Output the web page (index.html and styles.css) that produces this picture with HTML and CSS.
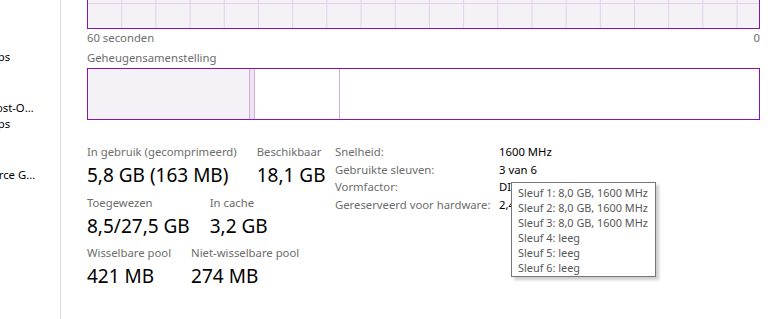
FILE: index.html
```html
<!DOCTYPE html>
<html lang="nl">
<head>
  <meta charset="UTF-8">
  <title>Taakbeheer - Geheugen</title>
  <link rel="stylesheet" href="styles.css">
</head>
<body>
  <div class="window">

    <!-- Sidebar: list of devices (scrolled, clipped on the left) -->
    <aside class="nav">
      <div class="nav-item">
        <div class="nav-line">Ethernet</div>
        <div class="nav-line">Ethernet</div>
        <div class="nav-line nav-sub">Verz.: 0 Ontv.: 0 Kbps</div>
      </div>
      <div class="nav-item">
        <div class="nav-line">Ethernet</div>
        <div class="nav-line">VirtualBox Host-Only Network</div>
        <div class="nav-line nav-sub">Verz.: 0 Ontv.: 0 Kbps</div>
      </div>
      <div class="nav-item">
        <div class="nav-line">GPU 0</div>
        <div class="nav-line">NVIDIA GeForce GTX 960</div>
        <div class="nav-line">1%</div>
      </div>
    </aside>

    <!-- Memory panel -->
    <main class="panel">
      <div class="graph"></div>
      <div class="axis">
        <span>60 seconden</span>
        <span>0</span>
      </div>

      <div class="caption">Geheugensamenstelling</div>
      <div class="composition">
        <div class="seg seg-used" style="width: 161px"></div>
        <div class="seg seg-modified" style="width: 4px"></div>
        <div class="seg seg-standby" style="width: 84px"></div>
        <div class="seg seg-free"></div>
      </div>

      <div class="details">
        <div class="stats">
          <div class="stat-row">
            <div class="stat">
              <div class="stat-label">In gebruik (gecomprimeerd)</div>
              <div class="stat-value">5,8 GB (163 MB)</div>
            </div>
            <div class="stat">
              <div class="stat-label">Beschikbaar</div>
              <div class="stat-value">18,1 GB</div>
            </div>
          </div>
          <div class="stat-row">
            <div class="stat">
              <div class="stat-label">Toegewezen</div>
              <div class="stat-value">8,5/27,5 GB</div>
            </div>
            <div class="stat">
              <div class="stat-label">In cache</div>
              <div class="stat-value">3,2 GB</div>
            </div>
          </div>
          <div class="stat-row">
            <div class="stat">
              <div class="stat-label">Wisselbare pool</div>
              <div class="stat-value">421 MB</div>
            </div>
            <div class="stat">
              <div class="stat-label">Niet-wisselbare pool</div>
              <div class="stat-value">274 MB</div>
            </div>
          </div>
        </div>

        <dl class="specs">
          <dt>Snelheid:</dt>
          <dd>1600 MHz</dd>
          <dt>Gebruikte sleuven:</dt>
          <dd>3 van 6</dd>
          <dt>Vormfactor:</dt>
          <dd>DIMM</dd>
          <dt>Gereserveerd voor hardware:</dt>
          <dd>2,4 MB</dd>
        </dl>

        <!-- hover tooltip over "Gebruikte sleuven" -->
        <div class="tooltip">
          <div>Sleuf 1: 8,0 GB, 1600 MHz</div>
          <div>Sleuf 2: 8,0 GB, 1600 MHz</div>
          <div>Sleuf 3: 8,0 GB, 1600 MHz</div>
          <div>Sleuf 4: leeg</div>
          <div>Sleuf 5: leeg</div>
          <div>Sleuf 6: leeg</div>
        </div>
      </div>
    </main>
  </div>
</body>
</html>
```

FILE: styles.css
```css
body {
  margin: 0;
  background: white;
  font-family: "Noto Sans", "Open Sans", sans-serif;
  font-size: 11.3px;
  color: #000;
}
.window {
  display: flex;
  height: 319px;
  overflow: hidden;
}

/* sidebar */
.nav {
  width: 60px;
  flex-shrink: 0;
  border-right: 1px solid #dadada;
  overflow: hidden;
}
.nav-item {
  padding: 17px 0 2px;
}
.nav-line {
  margin-left: -70px;
  width: 110px;
  line-height: 16px;
  white-space: nowrap;
  overflow: hidden;
  text-overflow: ellipsis;
}
.nav-sub {
  margin-left: -101px;
  width: auto;
}

/* main panel */
.panel {
  flex: 1;
  padding: 0 16px 0 26px;
}
.graph {
  height: 250px;
  margin-top: -223px;
  border: 1px solid #8b12ae;
  background-color: #f4f2f6;
  background-image:
    linear-gradient(to right, transparent 33.2px, #e3d0ea 33.2px),
    linear-gradient(to bottom, #e3d0ea 1px, transparent 1px);
  background-size: 34.2px 100%, 100% 25px;
}
.axis {
  display: flex;
  justify-content: space-between;
  margin-top: 1px;
  line-height: 16px;
  color: #6d6d6d;
}
.caption {
  margin-top: 4px;
  line-height: 16px;
  color: #6d6d6d;
}
.composition {
  display: flex;
  height: 50px;
  margin-top: 2px;
  border: 1px solid #8b12ae;
}
.seg {
  border-right: 1px solid #d0aedc;
}
.seg-used {
  background: #f4f2f6;
}
.seg-modified {
  background: #efe3f3;
}
.seg-free {
  flex: 1;
  border-right: none;
}

/* numbers below the bar */
.details {
  position: relative;
  display: flex;
  align-items: flex-start;
  margin-top: 24px;
}
.stats {
  width: 248px;
  flex-shrink: 0;
}
.stat-row {
  display: flex;
  gap: 20px;
  margin-bottom: 5.5px;
}
.stat-label {
  line-height: 16px;
  color: #6d6d6d;
  white-space: nowrap;
}
.stat-value {
  margin-top: 1px;
  font-size: 19px;
  line-height: 28px;
  white-space: nowrap;
}
.specs {
  display: grid;
  grid-template-columns: 164px auto;
  margin: -1px 0 0;
  line-height: 17.6px;
  white-space: nowrap;
}
.specs dt {
  color: #6d6d6d;
}
.specs dd {
  margin: 0;
}
.tooltip {
  position: absolute;
  top: 38px;
  left: 424px;
  padding: 2px 7px 1px 6px;
  border: 1px solid #767676;
  background: white;
  color: #575757;
  font-size: 10.9px;
  line-height: 15px;
  white-space: nowrap;
  box-shadow: 3px 3px 3px rgba(0, 0, 0, 0.2);
}
```
